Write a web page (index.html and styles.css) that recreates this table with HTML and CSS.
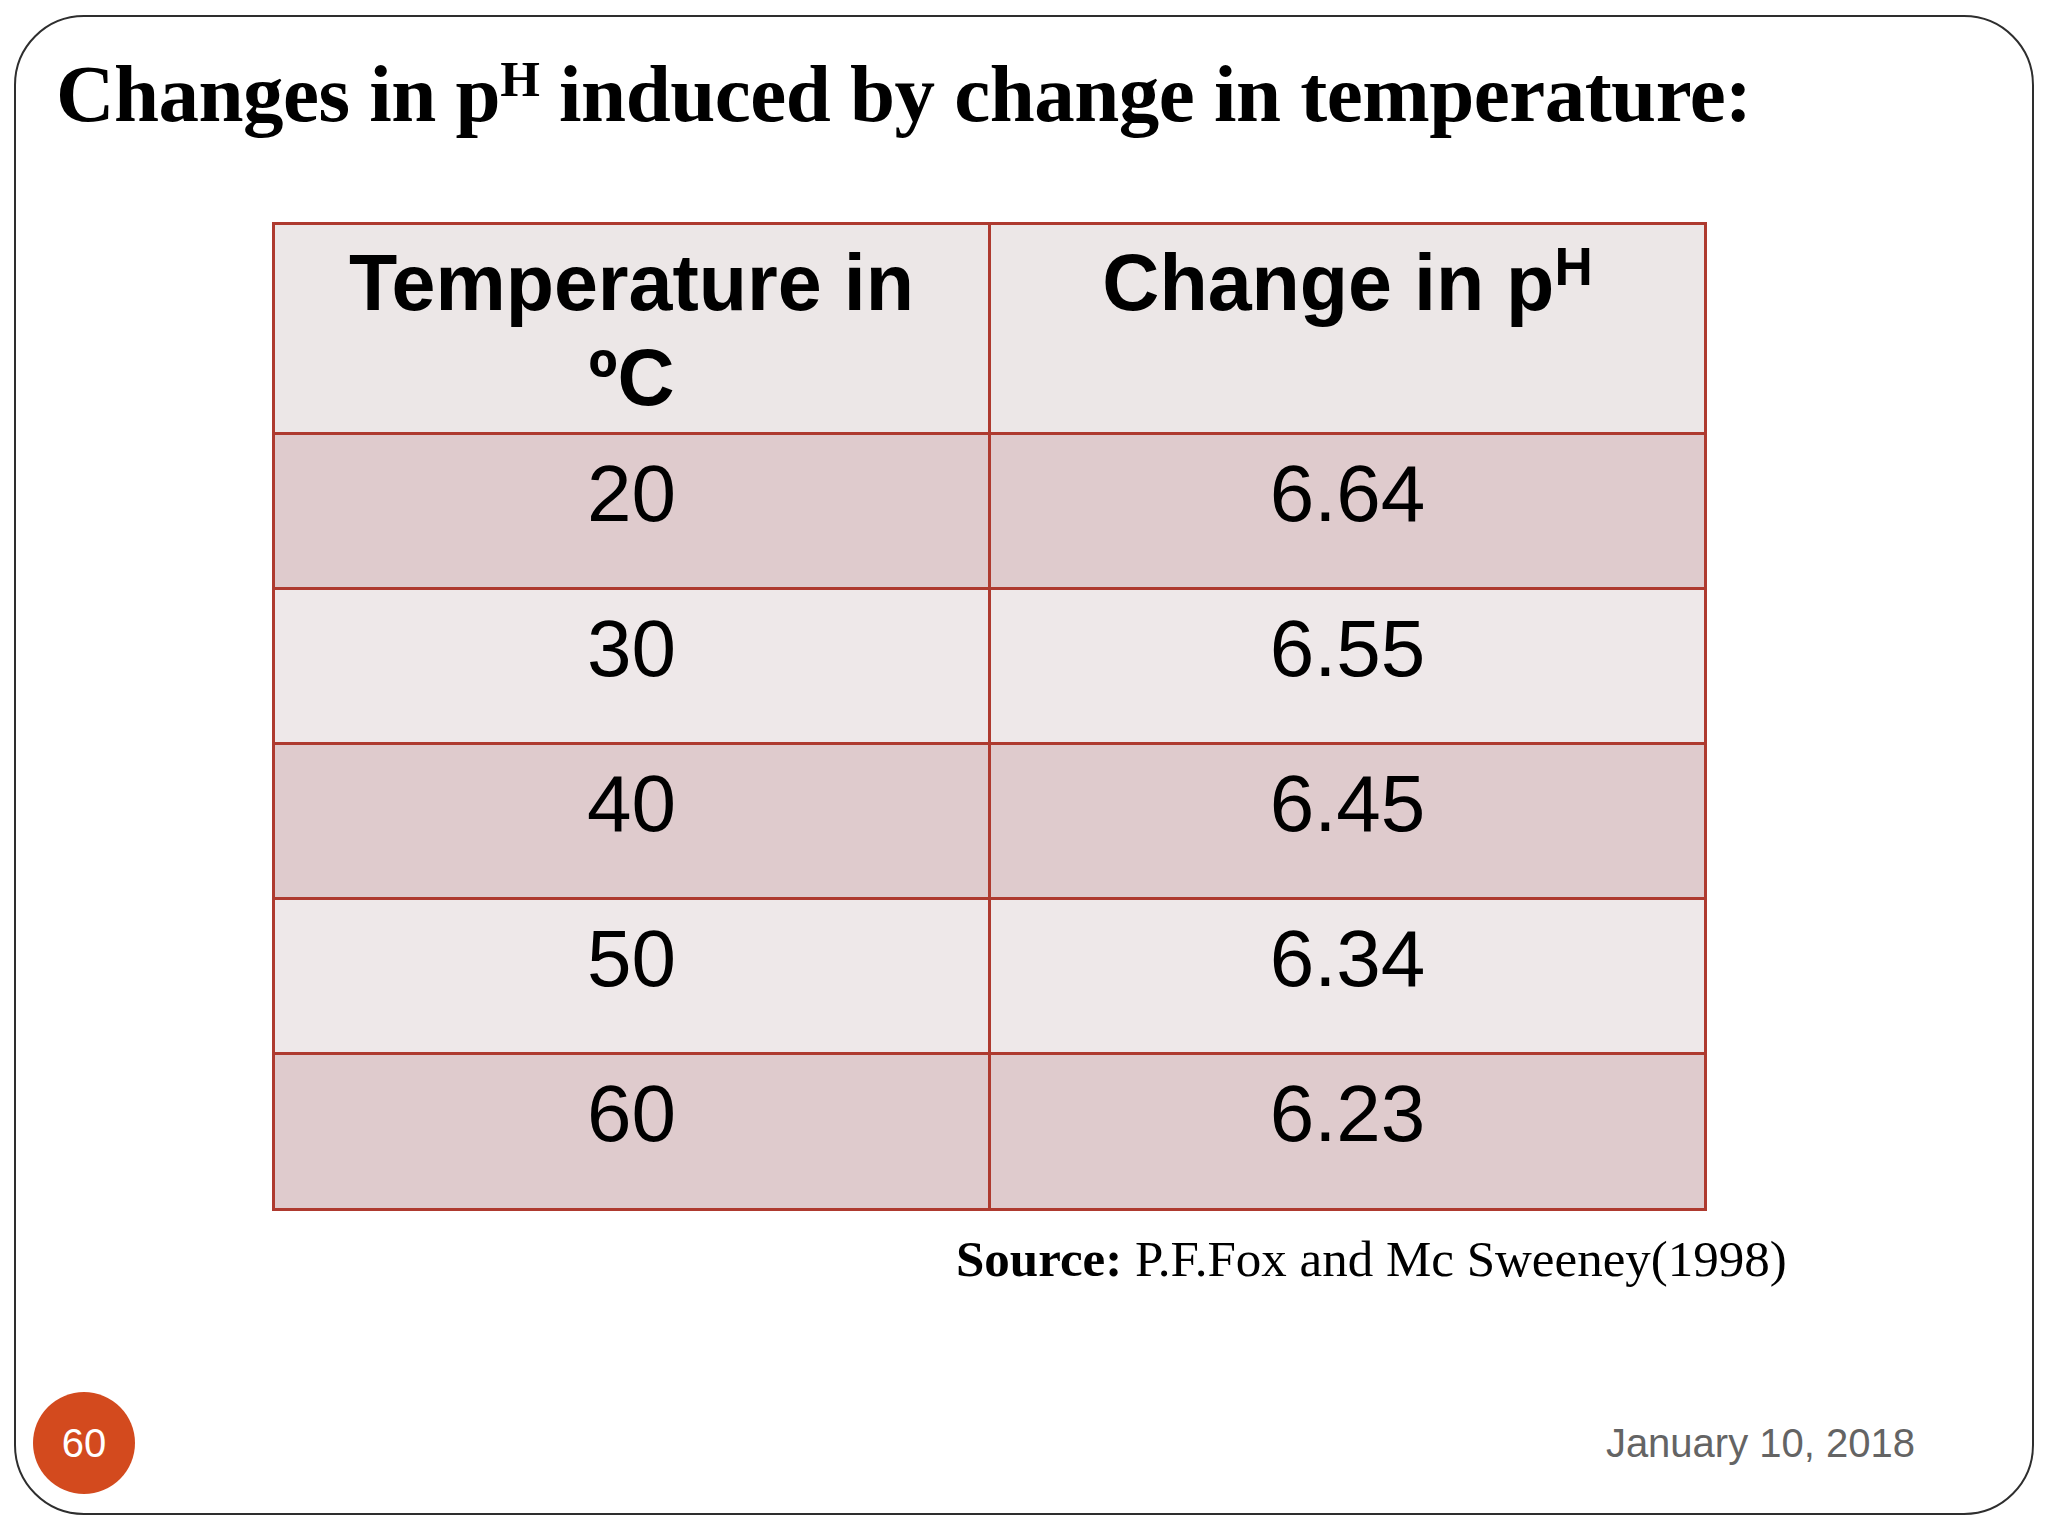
FILE: index.html
```html
<!DOCTYPE html>
<html>
<head>
<meta charset="utf-8">
<title>Changes in pH induced by change in temperature</title>
<link rel="stylesheet" href="styles.css">
</head>
<body>
<div class="slide">
  <h1 class="title">Changes in p<span class="title-sup">H</span> induced by change in temperature:</h1>
  <div class="table">
    <div class="cell head">Temperature in<br>ºC</div>
    <div class="cell head">Change in p<span class="head-sup">H</span></div>
    <div class="cell dark">20</div>
    <div class="cell dark">6.64</div>
    <div class="cell light">30</div>
    <div class="cell light">6.55</div>
    <div class="cell dark">40</div>
    <div class="cell dark">6.45</div>
    <div class="cell light">50</div>
    <div class="cell light">6.34</div>
    <div class="cell dark">60</div>
    <div class="cell dark">6.23</div>
  </div>
  <p class="source"><b>Source:</b> P.F.Fox and Mc Sweeney(1998)</p>
  <div class="footer">
    <div class="page-num">60</div>
    <div class="date">January 10, 2018</div>
  </div>
</div>
</body>
</html>
```
FILE: styles.css
```css
html, body {
  margin: 0;
  padding: 0;
  background: #ffffff;
}
body {
  width: 2048px;
  height: 1536px;
  padding: 15px 0 0 14px;
  box-sizing: border-box;
}
.slide {
  box-sizing: border-box;
  width: 2020px;
  height: 1500px;
  border: 2px solid #2e2e2e;
  border-radius: 70px;
  display: flex;
  flex-direction: column;
  background: #ffffff;
}
.title {
  margin: 0;
  padding: 30px 0 0 40px;
  font-family: "Liberation Serif", "Times New Roman", serif;
  font-weight: bold;
  font-size: 81px;
  letter-spacing: -0.5px;
  line-height: 94px;
  color: #000;
  white-space: nowrap;
}
.title-sup {
  font-size: 51px;
  vertical-align: 25px;
  line-height: 0;
}
.table {
  margin: 81px 0 0 256px;
  width: 1435px;
  display: grid;
  grid-template-columns: 1fr 1fr;
  grid-template-rows: 207px 152px 152px 152px 152px 153px;
  gap: 3px;
  padding: 3px;
  box-sizing: border-box;
  background: #ae3a2f;
}
.cell {
  font-family: "Liberation Sans", Arial, sans-serif;
  text-align: center;
  color: #000;
  padding-top: 11px;
  box-sizing: border-box;
}
.head {
  background: #ece7e7;
  font-weight: bold;
  font-size: 79px;
  line-height: 95px;
  padding-top: 10px;
}
.head-sup {
  font-size: 53px;
  vertical-align: 25px;
  line-height: 0;
}
.dark {
  background: #dfcbcd;
  font-size: 80px;
  line-height: 96px;
}
.light {
  background: #eee8e9;
  font-size: 80px;
  line-height: 96px;
}
.source {
  margin: 19px 0 0 940px;
  font-family: "Liberation Serif", "Times New Roman", serif;
  font-size: 51px;
  line-height: 58px;
  color: #000;
  white-space: nowrap;
}
.footer {
  margin-top: auto;
  display: flex;
  justify-content: space-between;
  align-items: center;
  padding: 0 117px 19px 17px;
}
.page-num {
  width: 102px;
  height: 102px;
  border-radius: 50%;
  background: #d34a1e;
  color: #ffffff;
  font-family: "Liberation Sans", Arial, sans-serif;
  font-size: 40px;
  display: flex;
  align-items: center;
  justify-content: center;
}
.date {
  font-family: "Liberation Sans", Arial, sans-serif;
  font-size: 40px;
  line-height: 45px;
  color: #646464;
}
```
